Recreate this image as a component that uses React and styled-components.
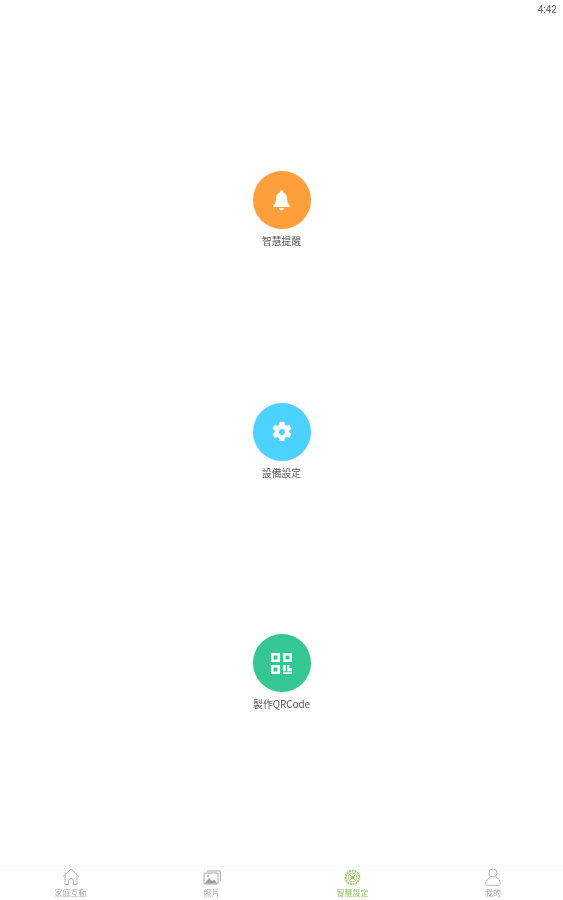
import React from "react";
import styled, { createGlobalStyle } from "styled-components";

const GlobalStyle = createGlobalStyle`
  html, body {
    margin: 0;
    padding: 0;
    background: #fff;
  }
  body {
    font-family: "Noto Sans CJK TC", "Noto Sans", sans-serif;
  }
`;

const BellIcon = () => (
  <svg width="17" height="21" viewBox="0 0 17 21" fill="#fff">
    <path d="M8.500 0.300c1 0 1.600 .7 1.600 1.700v.6c2.700 .8 3.900 3.100 3.900 6 0 3.400 .9 5 2.700 6.700v1.700H.3v-1.700C2.100 13.600 3 12 3 8.600c0-2.900 1.200-5.200 3.900-6V2c0-1 .6-1.700 1.600-1.700z" />
    <path d="M6 18h5c-.2 1.500-1.200 2.500-2.500 2.500S6.200 19.500 6 18z" />
  </svg>
);

const GearIcon = () => (
  <svg width="22" height="22" viewBox="0 0 24 24" fill="#fff">
    <path
      fillRule="evenodd"
      d="M9.600 0.800h4.800l.7 3.300 1.700 1 3.200-1.100 2.400 4.100-2.500 2.200v2l2.500 2.200-2.400 4.100-3.200-1.100-1.700 1-.7 3.300H9.600l-.7-3.300-1.700-1-3.200 1.100-2.400-4.100 2.500-2.200v-2L1.600 8.100 4 4l3.200 1.100 1.700-1zM12 8.800a3.200 3.200 0 1 0 0 6.400 3.200 3.200 0 0 0 0-6.400z"
    />
  </svg>
);

const QrIcon = () => (
  <svg width="23" height="23" viewBox="0 0 24 24" fill="#fff">
    <path
      fillRule="evenodd"
      d="M1 1h9.500v9.500H1zM3.700 3.700v4.100h4.100V3.700zM13.500 1H23v9.500h-9.500zM16.200 3.700v4.100h4.100V3.700zM1 13.500h9.500V23H1zM3.700 16.200v4.100h4.100v-4.100z"
    />
    <path d="M13.500 13.500h3v6.500h-3zM17.800 13.500h2.400v3.200H23v3.300h-5.200zM13.500 21h9.500v2h-9.500z" />
  </svg>
);

const HomeIcon = () => (
  <svg width="18" height="18" viewBox="0 0 18 18" fill="none" stroke="#b8b8b8" strokeWidth="1" strokeLinejoin="round">
    <path d="M1 8.500 9 1.200l8 7.300M3 7v9.500h3.500V13a2.500 2.500 0 0 1 5 0v3.500H15V7" />
  </svg>
);

const PhotoIcon = () => (
  <svg width="18" height="16" viewBox="0 0 18 16" fill="none" stroke="#a8a8a8" strokeWidth="1">
    <rect x="1" y="3" width="14" height="11" rx="1" />
    <path d="M4 1h12.500a1 1 0 0 1 1 1v9" />
    <path d="M1.500 13.500 6 8l3 3 2-1.500 3.500 4z" fill="#a0a0a0" stroke="none" />
    <circle cx="5" cy="6" r="1" fill="#a0a0a0" stroke="none" />
  </svg>
);

const SmartIcon = () => (
  <svg width="17" height="17" viewBox="0 0 18 18" fill="none" stroke="#9ccb6a">
    <circle cx="9" cy="9" r="7.200" strokeWidth="2.200" strokeDasharray="2 1" />
    <circle cx="9" cy="9" r="4.500" strokeWidth="1" />
    <circle cx="9" cy="9" r="1.800" fill="#8cc152" stroke="none" />
    <path d="M5.500 5.500 12.500 12.500M12.500 5.500 5.500 12.500" strokeWidth="1" />
  </svg>
);

const UserIcon = () => (
  <svg width="16" height="18" viewBox="0 0 16 18" fill="none" stroke="#b8b8b8" strokeWidth="1">
    <circle cx="8" cy="5" r="4" />
    <path d="M5.500 8.500C3 10 1 12.500 .7 15.500c0 1 .5 1.800 1.500 1.800h11.600c1 0 1.500-.8 1.500-1.800-.3-3-2.300-5.500-4.800-7" />
  </svg>
);

const actions = [
  { label: "智慧提醒", color: "#ff9f3c", icon: <BellIcon /> },
  { label: "設備設定", color: "#4dd2ff", icon: <GearIcon /> },
  { label: "製作QRCode", color: "#34c792", icon: <QrIcon /> },
];

const tabs = [
  { label: "家庭互動", icon: <HomeIcon /> },
  { label: "照片", icon: <PhotoIcon /> },
  { label: "智慧設定", icon: <SmartIcon />, active: true },
  { label: "我的", icon: <UserIcon /> },
];

const App = () => {
  return (
    <Page>
      <GlobalStyle />
      <StatusBar>4:42</StatusBar>
      <Main>
        {actions.map((action) => (
          <Action key={action.label}>
            <Circle $color={action.color}>{action.icon}</Circle>
            <ActionLabel>{action.label}</ActionLabel>
          </Action>
        ))}
      </Main>
      <TabBar>
        {tabs.map((tab) => (
          <Tab key={tab.label} $active={tab.active}>
            <TabIcon>{tab.icon}</TabIcon>
            <TabLabel>{tab.label}</TabLabel>
          </Tab>
        ))}
      </TabBar>
    </Page>
  );
};

// the reference is an upscaled capture, so everything sits slightly soft
const Page = styled.div`
  width: 563px;
  height: 900px;
  display: flex;
  flex-direction: column;
  background: #fff;
  overflow: hidden;
  filter: blur(0.6px);
`;

const StatusBar = styled.div`
  height: 18px;
  display: flex;
  align-items: center;
  justify-content: flex-end;
  padding-right: 6px;
  font-family: "Roboto", sans-serif;
  font-size: 10px;
  color: #666;
`;

const Main = styled.main`
  flex: 1;
  display: flex;
  flex-direction: column;
  align-items: center;
  gap: 153.6px;
  padding-top: 153px;
`;

const Action = styled.div`
  height: 78px;
  display: flex;
  flex-direction: column;
  align-items: center;
`;

const Circle = styled.div`
  width: 58px;
  height: 58px;
  border-radius: 50%;
  display: flex;
  align-items: center;
  justify-content: center;
  background: ${(props) => props.$color};
  box-shadow: 0 0 2px rgba(0, 0, 0, 0.12);
`;

const ActionLabel = styled.div`
  margin-top: 5px;
  font-size: 9.8px;
  line-height: 14px;
  color: #555;
  white-space: nowrap;
`;

const TabBar = styled.nav`
  height: 34px;
  display: grid;
  grid-template-columns: 141px 141px 141px 140px;
  border-top: 1px solid #f7f7f7;
  box-sizing: border-box;
`;

const Tab = styled.div`
  display: flex;
  flex-direction: column;
  align-items: center;
  color: ${(props) => (props.$active ? "#94c75f" : "#a8a8a8")};
`;

const TabIcon = styled.div`
  height: 19px;
  display: flex;
  align-items: flex-end;
  justify-content: center;
`;

const TabLabel = styled.div`
  margin-top: 1px;
  font-size: 8px;
  line-height: 12px;
  white-space: nowrap;
`;

export default App;
